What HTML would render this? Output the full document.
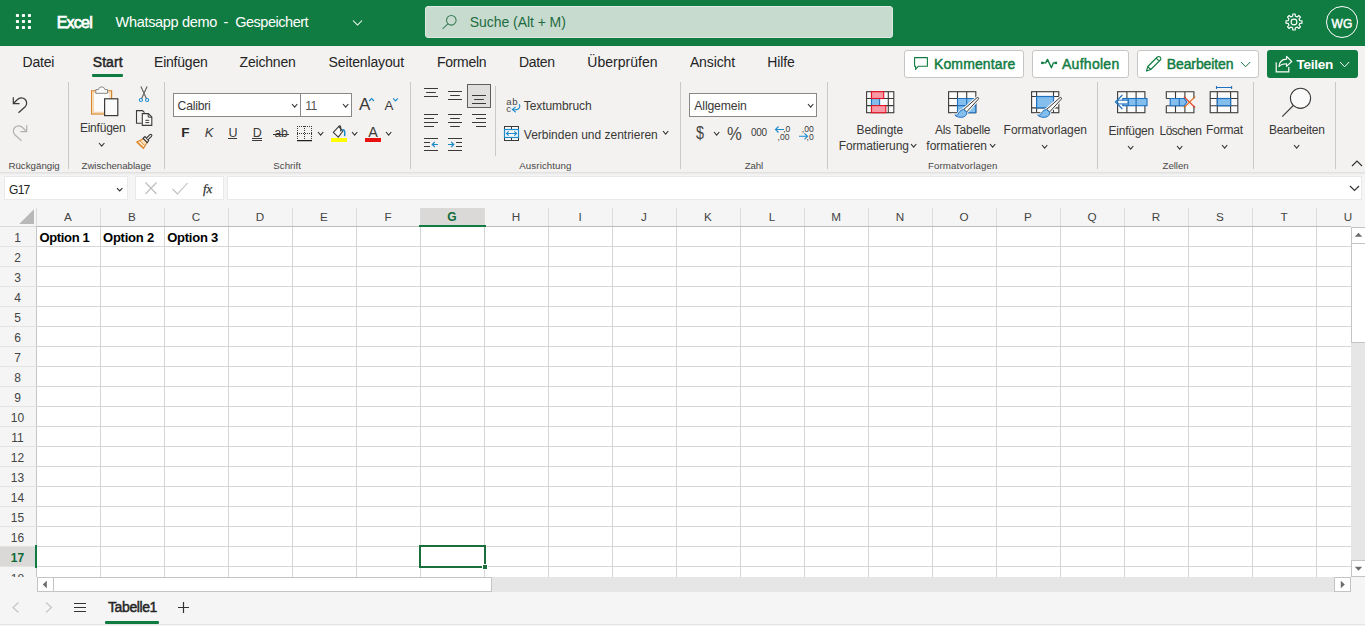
<!DOCTYPE html>
<html lang="de"><head><meta charset="utf-8"><title>Whatsapp demo.xlsx</title>
<style>
html,body{margin:0;padding:0;}
body{width:1365px;height:626px;overflow:hidden;background:#f5f5f5;font-family:"Liberation Sans",sans-serif;}
#app{position:relative;width:1365px;height:626px;overflow:hidden;}
.a{position:absolute;}
.t{position:absolute;white-space:nowrap;line-height:0;height:0;}
.t::before{content:"";display:inline-block;height:0;}
svg{position:absolute;overflow:visible;}
.sep{position:absolute;width:1px;background:#cbc9c7;}
.btn{position:absolute;box-sizing:border-box;border:1px solid #c8c6c4;border-radius:3px;background:#fff;}
.vl{position:absolute;width:1px;background:#d6d6d6;top:227px;height:350px;}
.hl{position:absolute;height:1px;background:#d6d6d6;left:36px;width:1315px;}
.chl{position:absolute;width:1px;background:#dcdcdc;top:208px;height:18px;}
</style></head><body><div id="app">

<div class="a" style="left:0;top:0;width:1365px;height:46px;background:#107c41"></div>
<svg width="1365" height="46" style="left:0;top:0"><rect x="15.9" y="14.1" width="3.1" height="2.9" rx="0.7" fill="#fff"/><rect x="15.9" y="20.1" width="3.1" height="2.9" rx="0.7" fill="#fff"/><rect x="15.9" y="26.1" width="3.1" height="2.9" rx="0.7" fill="#fff"/><rect x="21.9" y="14.1" width="3.1" height="2.9" rx="0.7" fill="#fff"/><rect x="21.9" y="20.1" width="3.1" height="2.9" rx="0.7" fill="#fff"/><rect x="21.9" y="26.1" width="3.1" height="2.9" rx="0.7" fill="#fff"/><rect x="27.9" y="14.1" width="3.1" height="2.9" rx="0.7" fill="#fff"/><rect x="27.9" y="20.1" width="3.1" height="2.9" rx="0.7" fill="#fff"/><rect x="27.9" y="26.1" width="3.1" height="2.9" rx="0.7" fill="#fff"/></svg>
<span class="t" style="left:56.7px;top:22.5px;font-size:16px;font-weight:400;color:#fff;letter-spacing:-0.765px;-webkit-text-stroke:0.75px #fff;">Excel</span>
<span class="t" style="left:115.6px;top:22.0px;font-size:14.5px;font-weight:400;color:#fff;letter-spacing:-0.315px;">Whatsapp demo</span>
<span class="t" style="left:223.5px;top:22.0px;font-size:14.5px;font-weight:400;color:#fff;letter-spacing:0px;">-</span>
<span class="t" style="left:235.2px;top:22.0px;font-size:14.5px;font-weight:400;color:#fff;letter-spacing:-0.472px;">Gespeichert</span>
<svg width="12" height="8" style="left:352px;top:19px"><path d="M1 1.5 L5.5 6 L10 1.5" fill="none" stroke="#fff" stroke-width="1.05"/></svg>
<div class="a" style="left:425px;top:6px;width:468px;height:32px;border-radius:3px;background:#c7dbcf;box-sizing:border-box;border:1px solid #dde9e1"></div>
<svg width="18" height="18" style="left:441px;top:13px"><circle cx="10.3" cy="7.3" r="4.8" fill="none" stroke="#3a7a55" stroke-width="1.05"/><path d="M6.8 10.8 L1.5 16" stroke="#3a7a55" stroke-width="1.05" fill="none"/></svg>
<span class="t" style="left:469.8px;top:22.0px;font-size:14px;font-weight:400;color:#1e6b41;letter-spacing:-0.058px;">Suche (Alt + M)</span>
<svg width="18" height="18" style="left:1285.2px;top:13px" viewBox="0 0 18 18"><path d="M7.62 3.26 L7.80 0.99 L10.20 0.99 L10.38 3.26 A5.9 5.9 0 0 1 12.08 3.97 L13.82 2.49 L15.51 4.18 L14.03 5.92 A5.9 5.9 0 0 1 14.74 7.62 L17.01 7.80 L17.01 10.20 L14.74 10.38 A5.9 5.9 0 0 1 14.03 12.08 L15.51 13.82 L13.82 15.51 L12.08 14.03 A5.9 5.9 0 0 1 10.38 14.74 L10.20 17.01 L7.80 17.01 L7.62 14.74 A5.9 5.9 0 0 1 5.92 14.03 L4.18 15.51 L2.49 13.82 L3.97 12.08 A5.9 5.9 0 0 1 3.26 10.38 L0.99 10.20 L0.99 7.80 L3.26 7.62 A5.9 5.9 0 0 1 3.97 5.92 L2.49 4.18 L4.18 2.49 L5.92 3.97 A5.9 5.9 0 0 1 7.62 3.26 Z" fill="none" stroke="#fff" stroke-width="1.15" stroke-linejoin="round"/><circle cx="9" cy="9" r="2.9" fill="none" stroke="#fff" stroke-width="1.15"/></svg>
<div class="a" style="left:1326px;top:6px;width:32px;height:32px;box-sizing:border-box;border:1px solid #fff;border-radius:50%"></div>
<span class="t" style="left:1331.6px;top:24.0px;font-size:12px;font-weight:400;color:#fff;letter-spacing:0px;-webkit-text-stroke:0.45px #fff;">WG</span>
<div class="a" style="left:0;top:46px;width:1365px;height:126px;background:#f3f2f1"></div>
<div class="a" style="left:0;top:172px;width:1365px;height:4px;background:linear-gradient(#dcdcdc,#e8e8e8 30%,#f0f0f0 60%,#f5f5f5)"></div>
<span class="t" style="left:22.5px;top:62.0px;font-size:14px;font-weight:400;color:#242424;letter-spacing:-0.177px;">Datei</span>
<span class="t" style="left:92.7px;top:62.0px;font-size:14px;font-weight:400;color:#242424;letter-spacing:0.104px;-webkit-text-stroke:0.45px #242424;">Start</span>
<span class="t" style="left:154px;top:62.0px;font-size:14px;font-weight:400;color:#242424;letter-spacing:-0.21px;">Einfügen</span>
<span class="t" style="left:239.6px;top:62.0px;font-size:14px;font-weight:400;color:#242424;letter-spacing:-0.199px;">Zeichnen</span>
<span class="t" style="left:328.6px;top:62.0px;font-size:14px;font-weight:400;color:#242424;letter-spacing:-0.139px;">Seitenlayout</span>
<span class="t" style="left:436.9px;top:62.0px;font-size:14px;font-weight:400;color:#242424;letter-spacing:-0.266px;">Formeln</span>
<span class="t" style="left:519px;top:62.0px;font-size:14px;font-weight:400;color:#242424;letter-spacing:-0.312px;">Daten</span>
<span class="t" style="left:587.3px;top:62.0px;font-size:14px;font-weight:400;color:#242424;letter-spacing:0.035px;">Überprüfen</span>
<span class="t" style="left:689.9px;top:62.0px;font-size:14px;font-weight:400;color:#242424;letter-spacing:-0.117px;">Ansicht</span>
<span class="t" style="left:767.3px;top:62.0px;font-size:14px;font-weight:400;color:#242424;letter-spacing:-0.103px;">Hilfe</span>
<div class="a" style="left:92px;top:74px;width:31px;height:3px;background:#107c41;border-radius:1px"></div>
<div class="btn" style="left:904px;top:50px;width:120px;height:28px"></div>
<div class="btn" style="left:1032px;top:50px;width:97px;height:28px"></div>
<div class="btn" style="left:1137px;top:50px;width:122px;height:28px"></div>
<div class="a" style="left:1267px;top:50px;width:91px;height:28px;border-radius:3px;background:#107c41"></div>
<span class="t" style="left:934px;top:64.0px;font-size:14px;font-weight:400;color:#107c41;letter-spacing:0.124px;-webkit-text-stroke:0.45px #107c41;">Kommentare</span>
<span class="t" style="left:1062px;top:64.0px;font-size:14px;font-weight:400;color:#107c41;letter-spacing:0.277px;-webkit-text-stroke:0.45px #107c41;">Aufholen</span>
<span class="t" style="left:1166.7px;top:64.0px;font-size:14px;font-weight:400;color:#107c41;letter-spacing:-0.092px;-webkit-text-stroke:0.45px #107c41;">Bearbeiten</span>
<span class="t" style="left:1296.4px;top:64.5px;font-size:13.6px;font-weight:700;color:#fff;letter-spacing:-0.28px;">Teilen</span>
<svg width="16" height="16" style="left:913px;top:56px"><path d="M1.600 1.600 H14.400 V10.300 H5.200 L2.600 13.300 V10.300 H1.600 Z" fill="none" stroke="#107c41" stroke-width="1.1" stroke-linejoin="round"/></svg>
<svg width="18" height="14" style="left:1040px;top:57px"><path d="M2.300 5.900 H5.700 L7.500 2.400 L11.400 10.800 L13.300 5.900 H15.900" fill="none" stroke="#107c41" stroke-width="1.400" stroke-linejoin="round"/><rect x="1.100" y="4.700" width="2.400" height="2.400" fill="#107c41"/><rect x="14.700" y="4.700" width="2.400" height="2.400" fill="#107c41"/></svg>
<svg width="18" height="18" style="left:1145px;top:55px"><path d="M1.500 16 L2.800 11.500 L12.300 2 A1.900 1.900 0 0 1 15 2 L15.300 2.300 A1.900 1.900 0 0 1 15.300 5 L5.800 14.500 Z M11.200 3.200 L14.100 6.100 M2.800 11.600 L5.700 14.500" fill="none" stroke="#107c41" stroke-width="1.1" stroke-linejoin="round"/></svg>
<svg width="12" height="8" style="left:1240px;top:61px"><path d="M1 1 L5.600 5.800 L10.200 1" fill="none" stroke="#107c41" stroke-width="1"/></svg>
<svg width="20" height="20" style="left:1275px;top:55px"><path d="M1.200 7.300 V16.800 H13.800 V11.900" fill="none" stroke="#fff" stroke-width="1.200"/><path d="M11.600 1.300 L16.700 6.500 L11.600 11.300 V8.800 C8 8.800 5.600 9.600 3.900 11.600 C4.300 7 7 4.300 11.600 4.100 Z" fill="none" stroke="#fff" stroke-width="1.100" stroke-linejoin="round"/></svg>
<svg width="12" height="8" style="left:1338.600px;top:61px"><path d="M1 1 L5.600 5.800 L10.200 1" fill="none" stroke="#fff" stroke-width="1"/></svg>
<div class="sep" style="left:68px;top:82px;height:87px"></div>
<div class="sep" style="left:164px;top:82px;height:87px"></div>
<div class="sep" style="left:410px;top:82px;height:87px"></div>
<div class="sep" style="left:680px;top:82px;height:87px"></div>
<div class="sep" style="left:827px;top:82px;height:87px"></div>
<div class="sep" style="left:1097px;top:82px;height:87px"></div>
<div class="sep" style="left:1253px;top:82px;height:87px"></div>
<div class="sep" style="left:1335px;top:82px;height:87px"></div>
<div class="sep" style="left:495px;top:86px;height:70px"></div>
<svg width="40" height="60" style="left:0;top:90px"><g fill="none" stroke-width="1.2"><path d="M13.300 7.300 V13.600 H19.500 M13.600 13.300 L17.500 9.500 A5.300 5.300 0 0 1 25.200 16.800 L18.500 22.800" stroke="#3b3a39"/><path d="M26.700 35 V41.600 H20.400 M26.400 41.300 L22.500 37.500 A5.300 5.300 0 0 0 14.800 44.800 L21.500 50.800" stroke="#b3b1af"/></g></svg>
<span class="t" style="left:8.4px;top:165.5px;font-size:9.7px;font-weight:400;color:#4a4846;letter-spacing:0.023px;">Rückgängig</span>
<svg width="32" height="34" style="left:88px;top:84px"><rect x="3.600" y="6.800" width="20" height="23.200" fill="#fdf6ee" stroke="#d9852a" stroke-width="1.2"/><rect x="5.300" y="8.500" width="16.600" height="19.800" fill="#fbfbfb" stroke="#f5cf9f" stroke-width="1"/>
<path d="M7.800 9.300 V5.600 H10.400 A3.300 3.300 0 0 1 16.900 5.600 H19.500 V9.300 Z" fill="#fafafa" stroke="#8a8886" stroke-width="1"/>
<rect x="16.600" y="14.800" width="13.200" height="16.800" fill="#fbfbfb" stroke="#3b3a39" stroke-width="1.2"/></svg>
<span class="t" style="left:79.9px;top:128.0px;font-size:12px;font-weight:400;color:#3a3836;letter-spacing:-0.222px;">Einfügen</span>
<svg width="7.4" height="5.2" style="left:98px;top:141.8px"><path d="M1 1 L3.70 4.20 L6.40 1" fill="none" stroke="#333" stroke-width="1.1"/></svg>
<svg width="14" height="18" style="left:137px;top:85px"><path d="M3.900 1.500 L9.600 14 M10.100 1.500 L4.400 14" stroke="#605e5c" stroke-width="1.1" fill="none"/><circle cx="3.900" cy="15" r="1.500" fill="#fff" stroke="#1e8bcd" stroke-width="1.1"/><circle cx="10.100" cy="15" r="1.500" fill="#fff" stroke="#1e8bcd" stroke-width="1.1"/></svg>
<svg width="18" height="18" style="left:135px;top:109px"><path d="M6.800 14.300 H1.500 V1.600 H7.500 L9.500 3.600" fill="none" stroke="#3b3a39" stroke-width="1.100"/><path d="M7.300 4.600 H13.300 L16.800 8.100 V16.400 H7.300 Z" fill="#fbfbfb" stroke="#3b3a39" stroke-width="1.100"/><path d="M13.200 4.800 V8.200 H16.600" fill="none" stroke="#3b3a39" stroke-width="1"/><path d="M10.300 11.300 H14.200 M10.300 13.600 H14.200" stroke="#3b3a39" stroke-width="1"/></svg>
<svg width="18" height="18" style="left:135px;top:133px"><path d="M1.700 9 L8.400 5.700 L12 9.500 L8.500 15.500 Z" fill="#fbe3c4" stroke="#d9852a" stroke-width="1.100" stroke-linejoin="round"/><path d="M3 9.300 L8.500 15 M5.300 8 L9.700 12.600" stroke="#d9852a" stroke-width="0.900" fill="none"/><path d="M8 5.200 L10 3.600 L13.700 7.500 L12.300 9.600 Z" fill="#f3f2f1" stroke="#3b3a39" stroke-width="1.100"/><path d="M11.600 5 L14.900 1.700 A1.100 1.100 0 0 1 16.500 3.300 L13.200 6.600" fill="#f3f2f1" stroke="#3b3a39" stroke-width="1.100"/></svg>
<span class="t" style="left:81.5px;top:165.5px;font-size:9.7px;font-weight:400;color:#4a4846;letter-spacing:-0.023px;">Zwischenablage</span>
<div class="a" style="left:173px;top:93px;width:179px;height:24px;box-sizing:border-box;border:1px solid #8a8886;background:#fff"></div>
<div class="a" style="left:300px;top:94px;width:1px;height:22px;background:#8a8886"></div>
<span class="t" style="left:177.6px;top:106.0px;font-size:12.2px;font-weight:400;color:#3a3836;letter-spacing:-0.221px;">Calibri</span>
<span class="t" style="left:305.2px;top:106.0px;font-size:12.2px;font-weight:400;color:#55534f;letter-spacing:0px;letter-spacing:-0.5px;">11</span>
<svg width="7.3" height="5.2" style="left:290.9px;top:103px"><path d="M1 1 L3.65 4.20 L6.30 1" fill="none" stroke="#333" stroke-width="1.1"/></svg>
<svg width="7.3" height="5.2" style="left:341.7px;top:103px"><path d="M1 1 L3.65 4.20 L6.30 1" fill="none" stroke="#333" stroke-width="1.1"/></svg>
<span class="t" style="left:359.1px;top:104.5px;font-size:17px;font-weight:400;color:#3b3a39;letter-spacing:0px;">A</span>
<svg width="8" height="6" style="left:368px;top:97px"><path d="M1.200 4 L3.600 1.500 L6 4" fill="none" stroke="#1e8bcd" stroke-width="1.2"/></svg>
<span class="t" style="left:384.6px;top:105.5px;font-size:13.3px;font-weight:400;color:#3b3a39;letter-spacing:0px;">A</span>
<svg width="8" height="6" style="left:392px;top:97px"><path d="M1.200 1.400 L3.500 3.900 L5.800 1.400" fill="none" stroke="#1e8bcd" stroke-width="1.2"/></svg>
<span class="t" style="left:181.3px;top:132.5px;font-size:13.6px;font-weight:700;color:#2b2a29;letter-spacing:0px;">F</span>
<span class="t" style="left:204.8px;top:132.5px;font-size:13px;font-weight:400;color:#3b3a39;letter-spacing:0px;font-style:italic;">K</span>
<span class="t" style="left:228.5px;top:133.0px;font-size:12.5px;font-weight:400;color:#3b3a39;letter-spacing:0px;">U</span>
<div class="a" style="left:228px;top:138px;width:9px;height:1px;background:#3b3a39"></div>
<span class="t" style="left:252.8px;top:133.0px;font-size:12.5px;font-weight:400;color:#3b3a39;letter-spacing:0px;">D</span>
<div class="a" style="left:252px;top:138px;width:10px;height:1px;background:#3b3a39"></div><div class="a" style="left:252px;top:140px;width:10px;height:1px;background:#3b3a39"></div>
<span class="t" style="left:274.4px;top:133.0px;font-size:12px;font-weight:400;color:#3b3a39;letter-spacing:0px;">ab</span>
<div class="a" style="left:273px;top:134px;width:16px;height:1px;background:#3b3a39"></div>
<svg width="17" height="17" style="left:296px;top:125px" shape-rendering="crispEdges"><g stroke="#3b3a39" stroke-width="1" stroke-dasharray="1 1" fill="none"><path d="M1 1.500 H16 M1.500 1 V15 M15.500 1 V15 M8.500 1 V15 M1 8.500 H16"/></g><path d="M1 15.500 H16" stroke="#201f1e" stroke-width="1"/><path d="M1 16 H16" stroke="#201f1e" stroke-width="0.500" opacity="0.5"/></svg>
<svg width="7.3" height="5.2" style="left:317px;top:131.2px"><path d="M1 1 L3.65 4.20 L6.30 1" fill="none" stroke="#333" stroke-width="1.1"/></svg>
<svg width="18" height="14" style="left:331px;top:125px"><path d="M2.300 7.400 L7.700 1.700 L11.900 6 L7.300 12.200 Z" fill="#fafafa" stroke="#3b3a39" stroke-width="1.100" stroke-linejoin="round"/><path d="M7.700 1.700 C8.200 0.500 9.700 0.600 9.700 1.900 V6.600" fill="none" stroke="#3b3a39" stroke-width="1.100"/><path d="M11.900 4.900 C13.200 4.100 14 6 13.700 10.600" fill="none" stroke="#1e8bcd" stroke-width="1.500" stroke-linecap="round"/></svg>
<div class="a" style="left:331px;top:138px;width:16px;height:4px;background:#ffff00"></div>
<svg width="7.3" height="5.2" style="left:350.8px;top:131.2px"><path d="M1 1 L3.65 4.20 L6.30 1" fill="none" stroke="#333" stroke-width="1.1"/></svg>
<span class="t" style="left:368.2px;top:132.0px;font-size:14.4px;font-weight:400;color:#3b3a39;letter-spacing:0px;">A</span>
<div class="a" style="left:365px;top:138px;width:16px;height:4px;background:#e8110f"></div>
<svg width="7.3" height="5.2" style="left:384.8px;top:131.2px"><path d="M1 1 L3.65 4.20 L6.30 1" fill="none" stroke="#333" stroke-width="1.1"/></svg>
<span class="t" style="left:273.3px;top:165.5px;font-size:9.7px;font-weight:400;color:#4a4846;letter-spacing:0.033px;">Schrift</span>
<div class="a" style="left:467px;top:84px;width:24px;height:24px;box-sizing:border-box;border:1px solid #605e5c;background:#e1dfdd"></div>
<svg width="20" height="20" style="left:424px;top:0"><path d="M0 88.5 H14 M2.2 92.5 H11.8 M0 96.5 H14" stroke="#3b3a39" stroke-width="1.2" fill="none"/></svg>
<svg width="20" height="20" style="left:448px;top:0"><path d="M0 91.5 H14 M2.2 95.5 H11.8 M0 99.5 H14" stroke="#3b3a39" stroke-width="1.2" fill="none"/></svg>
<svg width="20" height="20" style="left:472px;top:0"><path d="M0 95.5 H14 M2.2 99.5 H11.8 M0 103.5 H14" stroke="#3b3a39" stroke-width="1.2" fill="none"/></svg>
<svg width="20" height="20" style="left:424px;top:0"><path d="M0 114.5 H14 M0 118.5 H10 M0 122.5 H14 M0 126.5 H10" stroke="#3b3a39" stroke-width="1.2" fill="none"/></svg>
<svg width="20" height="20" style="left:448px;top:0"><path d="M0 114.5 H14 M2.2 118.5 H11.8 M0 122.5 H14 M2.2 126.5 H11.8" stroke="#3b3a39" stroke-width="1.2" fill="none"/></svg>
<svg width="20" height="20" style="left:472px;top:0"><path d="M0 114.5 H14 M4 118.5 H14 M0 122.5 H14 M4 126.5 H14" stroke="#3b3a39" stroke-width="1.2" fill="none"/></svg>
<svg width="20" height="20" style="left:424px;top:0"><path d="M0 138.5 H14 M0 142.5 H6 M0 146.5 H6 M0 150.5 H14" stroke="#3b3a39" stroke-width="1.2" fill="none"/></svg>
<svg width="20" height="20" style="left:448px;top:0"><path d="M0 138.5 H14 M8 142.5 H14 M8 146.5 H14 M0 150.5 H14" stroke="#3b3a39" stroke-width="1.2" fill="none"/></svg>
<svg width="8" height="8" style="left:431px;top:140px"><path d="M7 4.500 H1.500 M3.800 2 L1.300 4.500 L3.800 7" fill="none" stroke="#1e8bcd" stroke-width="1.2"/></svg>
<svg width="8" height="8" style="left:447px;top:140px"><path d="M1 4.500 H6.500 M4.200 2 L6.700 4.500 L4.200 7" fill="none" stroke="#1e8bcd" stroke-width="1.2"/></svg>
<span class="t" style="left:506.2px;top:101.5px;font-size:9.6px;font-weight:400;color:#484644;letter-spacing:0px;letter-spacing:0.7px;">ab</span>
<span class="t" style="left:506.3px;top:108.5px;font-size:9.6px;font-weight:400;color:#484644;letter-spacing:0px;">c</span>
<svg width="12" height="12" style="left:510px;top:102px"><path d="M9.300 2.300 C11 6.300 8 8.300 2.600 7.700 M5.600 4.900 L2.400 7.600 L5.800 10.200" fill="none" stroke="#1e8bcd" stroke-width="1.100"/></svg>
<span class="t" style="left:523.8px;top:106.0px;font-size:12px;font-weight:400;color:#3a3836;letter-spacing:-0.091px;">Textumbruch</span>
<svg width="18" height="18" style="left:503px;top:125px"><rect x="1.500" y="1.500" width="14" height="14" fill="#fbfbfb" stroke="#3b3a39" stroke-width="1"/><path d="M8.500 1.500 V4.500 M8.500 12.500 V15.500" stroke="#3b3a39" stroke-width="1"/><rect x="1.500" y="4.500" width="14" height="8" fill="#f6f6f6" stroke="#1e8bcd" stroke-width="1.200"/><path d="M3.600 8.500 H13.400 M5.700 6.300 L3.400 8.500 L5.700 10.700 M11.300 6.300 L13.600 8.500 L11.300 10.700" fill="none" stroke="#1e8bcd" stroke-width="1.100"/></svg>
<span class="t" style="left:523.8px;top:135.0px;font-size:12px;font-weight:400;color:#3a3836;letter-spacing:-0.005px;">Verbinden und zentrieren</span>
<svg width="7.3" height="5.2" style="left:661.8px;top:130.2px"><path d="M1 1 L3.65 4.20 L6.30 1" fill="none" stroke="#333" stroke-width="1.1"/></svg>
<span class="t" style="left:519.3px;top:165.5px;font-size:9.7px;font-weight:400;color:#4a4846;letter-spacing:0.103px;">Ausrichtung</span>
<div class="a" style="left:689px;top:93px;width:128px;height:24px;box-sizing:border-box;border:1px solid #8a8886;background:#fff"></div>
<span class="t" style="left:694.3px;top:106.0px;font-size:12.2px;font-weight:400;color:#3a3836;letter-spacing:-0.126px;">Allgemein</span>
<svg width="7.3" height="5.2" style="left:806.7px;top:103px"><path d="M1 1 L3.65 4.20 L6.30 1" fill="none" stroke="#333" stroke-width="1.1"/></svg>
<span class="t" style="left:696.2px;top:133.0px;font-size:18px;font-weight:400;color:#484644;letter-spacing:0px;transform:scaleX(0.8);transform-origin:0 0;">$</span>
<svg width="7.3" height="5.2" style="left:712.8px;top:131.2px"><path d="M1 1 L3.65 4.20 L6.30 1" fill="none" stroke="#333" stroke-width="1.1"/></svg>
<span class="t" style="left:727.2px;top:133.5px;font-size:18.5px;font-weight:400;color:#484644;letter-spacing:0px;transform:scaleX(0.9);transform-origin:0 0;">%</span>
<span class="t" style="left:750.9px;top:132.5px;font-size:10px;font-weight:400;color:#3b3a39;letter-spacing:-0.296px;">000</span>
<span class="t" style="left:783.2px;top:129.0px;font-size:8.6px;font-weight:400;color:#3b3a39;letter-spacing:0px;">,0</span>
<span class="t" style="left:777.5px;top:137.0px;font-size:8.6px;font-weight:400;color:#3b3a39;letter-spacing:0.016px;">,00</span>
<svg width="12" height="8" style="left:774px;top:125px"><path d="M10 4.500 H1.800 M4.500 1.500 L1.500 4.500 L4.500 7.500" fill="none" stroke="#1e8bcd" stroke-width="1.1"/></svg>
<span class="t" style="left:801.8px;top:129.0px;font-size:8.6px;font-weight:400;color:#3b3a39;letter-spacing:0.016px;">,00</span>
<span class="t" style="left:806.6px;top:137.0px;font-size:8.6px;font-weight:400;color:#3b3a39;letter-spacing:0px;">,0</span>
<svg width="12" height="8" style="left:798px;top:132px"><path d="M1 4.300 H9.200 M6.500 1.300 L9.500 4.300 L6.500 7.300" fill="none" stroke="#1e8bcd" stroke-width="1.1"/></svg>
<span class="t" style="left:744.7px;top:165.5px;font-size:9.7px;font-weight:400;color:#4a4846;letter-spacing:-0.14px;">Zahl</span>
<svg width="34" height="30" style="left:864px;top:88px"><rect x="2.600" y="3.700" width="27.200" height="21" fill="#fbfbfb" stroke="#3b3a39" stroke-width="1.100"/><path d="M7.500 3.700 V24.700 M24.300 3.700 V24.700 M2.600 10.500 H29.800 M2.600 17.600 H29.800" stroke="#3b3a39" stroke-width="1.100"/><rect x="7.500" y="10.500" width="8.100" height="7.100" fill="#83beec" stroke="#1e70c0" stroke-width="1.100"/><rect x="7.500" y="3.700" width="12.200" height="6.800" fill="#f79aa5" stroke="#e81123" stroke-width="1.100"/><rect x="7.500" y="17.600" width="14.300" height="7.100" fill="#f79aa5" stroke="#e81123" stroke-width="1.100"/></svg>
<span class="t" style="left:856.5px;top:130.0px;font-size:12px;font-weight:400;color:#3a3836;letter-spacing:-0.109px;">Bedingte</span>
<span class="t" style="left:838.7px;top:146.0px;font-size:12px;font-weight:400;color:#3a3836;letter-spacing:-0.106px;">Formatierung</span>
<svg width="7.3" height="5.2" style="left:910.3px;top:142.5px"><path d="M1 1 L3.65 4.20 L6.30 1" fill="none" stroke="#333" stroke-width="1.1"/></svg>
<svg width="40" height="34" style="left:946px;top:88px"><rect x="2.600" y="3.700" width="27.200" height="21" fill="#fbfbfb" stroke="#3b3a39" stroke-width="1.100"/><rect x="11.500" y="10.500" width="18.300" height="14.200" fill="#83beec"/><path d="M11.500 3.700 V10.500 M20.700 3.700 V10.500 M2.600 10.500 H11.500 M2.600 17.600 H11.500" stroke="#3b3a39" stroke-width="1.100"/><path d="M11.500 10.500 H29.800 M11.500 17.600 H29.800 M11.500 10.500 V24.700 M20.700 10.500 V24.700 M29.800 10.500 V24.700 M11.500 24.700 H29.800" stroke="#1e70c0" stroke-width="1.100"/><path d="M31.1 9.6 C32.1 9.0 33.1 10.1 32.4 11.1 L20.6 24.0 L17.8 21.4 Z" fill="none" stroke="#f3f2f1" stroke-width="3"/><path d="M17.5 21.5 C13.9 22.2 12.8 24.6 12.0 26.2 C11.2 27.2 10.2 27.3 8.8 27.1 C11.2 29.6 17.2 30.2 19.5 27.8 C20.6 26.6 20.9 25.4 20.8 24.1 Z" fill="none" stroke="#f3f2f1" stroke-width="2.6"/><path d="M31.1 9.6 C32.1 9.0 33.1 10.1 32.4 11.1 L20.6 24.0 L17.8 21.4 Z" fill="#fafafa" stroke="#3b3a39" stroke-width="1"/><path d="M17.5 21.5 C13.9 22.2 12.8 24.6 12.0 26.2 C11.2 27.2 10.2 27.3 8.8 27.1 C11.2 29.6 17.2 30.2 19.5 27.8 C20.6 26.6 20.9 25.4 20.8 24.1 Z" fill="#83beec" stroke="#1e70c0" stroke-width="1"/></svg>
<span class="t" style="left:934.9px;top:130.0px;font-size:12px;font-weight:400;color:#3a3836;letter-spacing:-0.221px;">Als Tabelle</span>
<span class="t" style="left:926.3px;top:146.0px;font-size:12px;font-weight:400;color:#3a3836;letter-spacing:-0.0px;">formatieren</span>
<svg width="7.3" height="5.2" style="left:989.3px;top:142.5px"><path d="M1 1 L3.65 4.20 L6.30 1" fill="none" stroke="#333" stroke-width="1.1"/></svg>
<svg width="40" height="34" style="left:1029px;top:88px"><rect x="2.600" y="3.700" width="27.200" height="21" fill="#fbfbfb" stroke="#3b3a39" stroke-width="1.100"/><path d="M7.600 3.700 V24.700 M24.500 3.700 V24.700 M2.600 8.500 H29.800 M2.600 19.900 H29.800" stroke="#3b3a39" stroke-width="1.100"/><rect x="7.600" y="8.500" width="16.900" height="11.400" fill="#83beec" stroke="#1e70c0" stroke-width="1.200"/><path d="M31.0 9.6 C32.0 9.0 33.0 10.1 32.3 11.1 L20.5 24.0 L17.7 21.4 Z" fill="none" stroke="#f3f2f1" stroke-width="3"/><path d="M17.4 21.5 C13.8 22.2 12.7 24.6 11.9 26.2 C11.1 27.2 10.1 27.3 8.7 27.1 C11.1 29.6 17.1 30.2 19.4 27.8 C20.5 26.6 20.8 25.4 20.7 24.1 Z" fill="none" stroke="#f3f2f1" stroke-width="2.6"/><path d="M31.0 9.6 C32.0 9.0 33.0 10.1 32.3 11.1 L20.5 24.0 L17.7 21.4 Z" fill="#fafafa" stroke="#3b3a39" stroke-width="1"/><path d="M17.4 21.5 C13.8 22.2 12.7 24.6 11.9 26.2 C11.1 27.2 10.1 27.3 8.7 27.1 C11.1 29.6 17.1 30.2 19.4 27.8 C20.5 26.6 20.8 25.4 20.7 24.1 Z" fill="#83beec" stroke="#1e70c0" stroke-width="1"/></svg>
<span class="t" style="left:1003.6px;top:130.0px;font-size:12px;font-weight:400;color:#3a3836;letter-spacing:-0.046px;">Formatvorlagen</span>
<svg width="7.3" height="5.2" style="left:1040.7px;top:143.6px"><path d="M1 1 L3.65 4.20 L6.30 1" fill="none" stroke="#333" stroke-width="1.1"/></svg>
<span class="t" style="left:928px;top:165.5px;font-size:9.7px;font-weight:400;color:#4a4846;letter-spacing:0.111px;">Formatvorlagen</span>
<svg width="40" height="30" style="left:1112px;top:88px"><rect x="5.600" y="3.700" width="27.300" height="21" fill="#fbfbfb" stroke="#3b3a39" stroke-width="1.100"/><path d="M14.900 3.700 V24.700 M24.100 3.700 V24.700" stroke="#3b3a39" stroke-width="1.100"/><rect x="10.800" y="10.500" width="24.200" height="7.200" fill="#83beec" stroke="#1e70c0" stroke-width="1.100"/><path d="M16.300 10.500 V17.700 M24.100 10.500 V17.700" stroke="#1e70c0" stroke-width="1.100"/><path d="M10.400 7 L3.400 14 L10.400 21" fill="none" stroke="#1e70c0" stroke-width="1.100"/><path d="M4.800 14 L7.200 12.200 H16 V15.900 H7.200 Z" fill="#fafafa" stroke="#1e70c0" stroke-width="1"/></svg>
<span class="t" style="left:1108.5px;top:131.0px;font-size:12px;font-weight:400;color:#3a3836;letter-spacing:-0.234px;">Einfügen</span>
<svg width="7.3" height="5.2" style="left:1126.9px;top:144.6px"><path d="M1 1 L3.65 4.20 L6.30 1" fill="none" stroke="#333" stroke-width="1.1"/></svg>
<svg width="40" height="30" style="left:1163px;top:88px"><path d="M3.300 10.500 V3.700 H30.900 V10.500 M3.300 17.700 V24.700 H30.900 V17.700" fill="#fbfbfb" stroke="#3b3a39" stroke-width="1.100"/><path d="M12.500 3.700 V10.500 M21.900 3.700 V10.500 M12.500 17.700 V24.700 M21.900 17.700 V24.700 M3.300 10.500 H21 M3.300 17.700 H21" stroke="#3b3a39" stroke-width="1.100"/><path d="M7.200 10.500 H21.300 L23.900 14.100 L21.300 17.700 H7.200 Z" fill="#83beec" stroke="#1e70c0" stroke-width="1.100"/><path d="M16.300 10.500 V17.700" stroke="#1e70c0" stroke-width="1.100"/><path d="M21 8.600 L32.100 19.600" stroke="#e8381a" stroke-width="1.200"/><path d="M32.100 8.600 L21 19.600" stroke="#e06a1b" stroke-width="1.200"/></svg>
<span class="t" style="left:1159.5px;top:131.0px;font-size:12px;font-weight:400;color:#3a3836;letter-spacing:-0.496px;">Löschen</span>
<svg width="7.3" height="5.2" style="left:1175.7px;top:144.6px"><path d="M1 1 L3.65 4.20 L6.30 1" fill="none" stroke="#333" stroke-width="1.1"/></svg>
<svg width="34" height="34" style="left:1207px;top:84px"><rect x="3.200" y="7.700" width="27.600" height="21" fill="#fbfbfb" stroke="#3b3a39" stroke-width="1.100"/><path d="M10.300 7.700 V28.700 M23.600 7.700 V28.700 M3.200 14.500 H30.800 M3.200 21.700 H30.800" stroke="#3b3a39" stroke-width="1.100"/><rect x="10.300" y="14.500" width="13.300" height="7.200" fill="#83beec" stroke="#1e70c0" stroke-width="1.200"/><path d="M9.500 3.500 H24.600 M9.500 1.900 V5.100 M24.600 1.900 V5.100" stroke="#1e70c0" stroke-width="1.100" fill="none"/></svg>
<span class="t" style="left:1206px;top:130.0px;font-size:12px;font-weight:400;color:#3a3836;letter-spacing:-0.169px;">Format</span>
<svg width="7.3" height="5.2" style="left:1220.7px;top:143.6px"><path d="M1 1 L3.65 4.20 L6.30 1" fill="none" stroke="#333" stroke-width="1.1"/></svg>
<span class="t" style="left:1162.5px;top:165.5px;font-size:9.7px;font-weight:400;color:#4a4846;letter-spacing:-0.032px;">Zellen</span>
<svg width="36" height="36" style="left:1279px;top:85px"><circle cx="21.500" cy="13.300" r="10.100" fill="#fafafa" stroke="#3b3a39" stroke-width="1.100"/><path d="M14.300 20.500 L3.200 31.700" stroke="#3b3a39" stroke-width="1.100"/></svg>
<span class="t" style="left:1268.9px;top:130.0px;font-size:12px;font-weight:400;color:#3a3836;letter-spacing:-0.225px;">Bearbeiten</span>
<svg width="7.3" height="5.2" style="left:1293.1px;top:143.6px"><path d="M1 1 L3.65 4.20 L6.30 1" fill="none" stroke="#333" stroke-width="1.1"/></svg>
<svg width="14" height="10" style="left:1350px;top:158px"><path d="M2 8 L7 3 L12 8" fill="none" stroke="#333" stroke-width="1.2"/></svg>
<div class="a" style="left:4px;top:176px;width:124px;height:24px;background:#fff;box-sizing:border-box;border:1px solid #e9e9e9"></div>
<div class="a" style="left:135px;top:176px;width:89px;height:24px;background:#fff;box-sizing:border-box;border:1px solid #e9e9e9"></div>
<div class="a" style="left:227px;top:176px;width:1135px;height:24px;background:#fff;box-sizing:border-box;border:1px solid #e9e9e9"></div>
<span class="t" style="left:9.1px;top:190.0px;font-size:12px;font-weight:400;color:#242424;letter-spacing:-0.763px;">G17</span>
<svg width="8" height="6" style="left:116px;top:186.700px"><path d="M1 1.2 L3.7 4 L6.4 1.2" fill="none" stroke="#333" stroke-width="1.2"/></svg>
<svg width="80" height="20" style="left:140px;top:179px"><path d="M5.500 3.500 L16.500 15 M16.500 3.500 L5.500 15" stroke="#bdbdbd" stroke-width="1.1" fill="none"/><path d="M32.500 10 L37.500 15 L47.500 4" stroke="#bdbdbd" stroke-width="1.1" fill="none"/></svg>
<span class="t" style="left:203px;top:189.3px;font-family:'Liberation Serif',serif;font-style:italic;font-size:13px;color:#333;letter-spacing:0px;-webkit-text-stroke:0.25px #333">fx</span>
<svg width="12" height="8" style="left:1349px;top:185px"><path d="M1 1 L5.500 5.500 L10 1" fill="none" stroke="#333" stroke-width="1.2"/></svg>
<div class="a" style="left:36px;top:227px;width:1315px;height:350px;background:#fff"></div>
<div class="a" style="left:420px;top:208px;width:65px;height:18px;background:#dbd9d7"></div>
<div class="a" style="left:0;top:547px;width:36px;height:20px;background:#dbd9d7"></div>
<div class="vl" style="left:36px"></div>
<span class="t" style="left:56.0px;top:216.5px;font-size:11.7px;font-weight:400;color:#444;width:24px;text-align:center;">A</span>
<div class="chl" style="left:100px"></div>
<div class="vl" style="left:100px"></div>
<span class="t" style="left:120.0px;top:216.5px;font-size:11.7px;font-weight:400;color:#444;width:24px;text-align:center;">B</span>
<div class="chl" style="left:164px"></div>
<div class="vl" style="left:164px"></div>
<span class="t" style="left:184.0px;top:216.5px;font-size:11.7px;font-weight:400;color:#444;width:24px;text-align:center;">C</span>
<div class="chl" style="left:228px"></div>
<div class="vl" style="left:228px"></div>
<span class="t" style="left:248.0px;top:216.5px;font-size:11.7px;font-weight:400;color:#444;width:24px;text-align:center;">D</span>
<div class="chl" style="left:292px"></div>
<div class="vl" style="left:292px"></div>
<span class="t" style="left:312.0px;top:216.5px;font-size:11.7px;font-weight:400;color:#444;width:24px;text-align:center;">E</span>
<div class="chl" style="left:356px"></div>
<div class="vl" style="left:356px"></div>
<span class="t" style="left:376.0px;top:216.5px;font-size:11.7px;font-weight:400;color:#444;width:24px;text-align:center;">F</span>
<div class="chl" style="left:420px"></div>
<div class="vl" style="left:420px"></div>
<span class="t" style="left:440.0px;top:217.0px;font-size:12px;font-weight:700;color:#0e6b38;width:24px;text-align:center;">G</span>
<div class="chl" style="left:484px"></div>
<div class="vl" style="left:484px"></div>
<span class="t" style="left:504.0px;top:216.5px;font-size:11.7px;font-weight:400;color:#444;width:24px;text-align:center;">H</span>
<div class="chl" style="left:548px"></div>
<div class="vl" style="left:548px"></div>
<span class="t" style="left:568.0px;top:216.5px;font-size:11.7px;font-weight:400;color:#444;width:24px;text-align:center;">I</span>
<div class="chl" style="left:612px"></div>
<div class="vl" style="left:612px"></div>
<span class="t" style="left:632.0px;top:216.5px;font-size:11.7px;font-weight:400;color:#444;width:24px;text-align:center;">J</span>
<div class="chl" style="left:676px"></div>
<div class="vl" style="left:676px"></div>
<span class="t" style="left:696.0px;top:216.5px;font-size:11.7px;font-weight:400;color:#444;width:24px;text-align:center;">K</span>
<div class="chl" style="left:740px"></div>
<div class="vl" style="left:740px"></div>
<span class="t" style="left:760.0px;top:216.5px;font-size:11.7px;font-weight:400;color:#444;width:24px;text-align:center;">L</span>
<div class="chl" style="left:804px"></div>
<div class="vl" style="left:804px"></div>
<span class="t" style="left:824.0px;top:216.5px;font-size:11.7px;font-weight:400;color:#444;width:24px;text-align:center;">M</span>
<div class="chl" style="left:868px"></div>
<div class="vl" style="left:868px"></div>
<span class="t" style="left:888.0px;top:216.5px;font-size:11.7px;font-weight:400;color:#444;width:24px;text-align:center;">N</span>
<div class="chl" style="left:932px"></div>
<div class="vl" style="left:932px"></div>
<span class="t" style="left:952.0px;top:216.5px;font-size:11.7px;font-weight:400;color:#444;width:24px;text-align:center;">O</span>
<div class="chl" style="left:996px"></div>
<div class="vl" style="left:996px"></div>
<span class="t" style="left:1016.0px;top:216.5px;font-size:11.7px;font-weight:400;color:#444;width:24px;text-align:center;">P</span>
<div class="chl" style="left:1060px"></div>
<div class="vl" style="left:1060px"></div>
<span class="t" style="left:1080.0px;top:216.5px;font-size:11.7px;font-weight:400;color:#444;width:24px;text-align:center;">Q</span>
<div class="chl" style="left:1124px"></div>
<div class="vl" style="left:1124px"></div>
<span class="t" style="left:1144.0px;top:216.5px;font-size:11.7px;font-weight:400;color:#444;width:24px;text-align:center;">R</span>
<div class="chl" style="left:1188px"></div>
<div class="vl" style="left:1188px"></div>
<span class="t" style="left:1208.0px;top:216.5px;font-size:11.7px;font-weight:400;color:#444;width:24px;text-align:center;">S</span>
<div class="chl" style="left:1252px"></div>
<div class="vl" style="left:1252px"></div>
<span class="t" style="left:1272.0px;top:216.5px;font-size:11.7px;font-weight:400;color:#444;width:24px;text-align:center;">T</span>
<div class="chl" style="left:1316px"></div>
<div class="vl" style="left:1316px"></div>
<span class="t" style="left:1336.0px;top:216.5px;font-size:11.7px;font-weight:400;color:#444;width:24px;text-align:center;">U</span>
<div class="a" style="left:36px;top:226px;width:1315px;height:1px;background:#bdbdbd"></div>
<div class="a" style="left:36px;top:208px;width:1px;height:18px;background:#dcdcdc"></div>
<div class="a" style="left:36px;top:226px;width:1px;height:351px;background:#c6c6c6"></div>
<div class="a" style="left:0;top:226px;width:36px;height:1px;background:#d9d9d9"></div>
<div class="hl" style="top:246px"></div>
<div class="a" style="left:0;top:246px;width:36px;height:1px;background:#e3e3e3"></div>
<span class="t" style="left:5.5px;top:238.0px;font-size:12px;font-weight:400;color:#444;width:24px;text-align:center;">1</span>
<div class="hl" style="top:266px"></div>
<div class="a" style="left:0;top:266px;width:36px;height:1px;background:#e3e3e3"></div>
<span class="t" style="left:5.5px;top:258.0px;font-size:12px;font-weight:400;color:#444;width:24px;text-align:center;">2</span>
<div class="hl" style="top:286px"></div>
<div class="a" style="left:0;top:286px;width:36px;height:1px;background:#e3e3e3"></div>
<span class="t" style="left:5.5px;top:278.0px;font-size:12px;font-weight:400;color:#444;width:24px;text-align:center;">3</span>
<div class="hl" style="top:306px"></div>
<div class="a" style="left:0;top:306px;width:36px;height:1px;background:#e3e3e3"></div>
<span class="t" style="left:5.5px;top:298.0px;font-size:12px;font-weight:400;color:#444;width:24px;text-align:center;">4</span>
<div class="hl" style="top:326px"></div>
<div class="a" style="left:0;top:326px;width:36px;height:1px;background:#e3e3e3"></div>
<span class="t" style="left:5.5px;top:318.0px;font-size:12px;font-weight:400;color:#444;width:24px;text-align:center;">5</span>
<div class="hl" style="top:346px"></div>
<div class="a" style="left:0;top:346px;width:36px;height:1px;background:#e3e3e3"></div>
<span class="t" style="left:5.5px;top:338.0px;font-size:12px;font-weight:400;color:#444;width:24px;text-align:center;">6</span>
<div class="hl" style="top:366px"></div>
<div class="a" style="left:0;top:366px;width:36px;height:1px;background:#e3e3e3"></div>
<span class="t" style="left:5.5px;top:358.0px;font-size:12px;font-weight:400;color:#444;width:24px;text-align:center;">7</span>
<div class="hl" style="top:386px"></div>
<div class="a" style="left:0;top:386px;width:36px;height:1px;background:#e3e3e3"></div>
<span class="t" style="left:5.5px;top:378.0px;font-size:12px;font-weight:400;color:#444;width:24px;text-align:center;">8</span>
<div class="hl" style="top:406px"></div>
<div class="a" style="left:0;top:406px;width:36px;height:1px;background:#e3e3e3"></div>
<span class="t" style="left:5.5px;top:398.0px;font-size:12px;font-weight:400;color:#444;width:24px;text-align:center;">9</span>
<div class="hl" style="top:426px"></div>
<div class="a" style="left:0;top:426px;width:36px;height:1px;background:#e3e3e3"></div>
<span class="t" style="left:5.5px;top:418.0px;font-size:12px;font-weight:400;color:#444;width:24px;text-align:center;">10</span>
<div class="hl" style="top:446px"></div>
<div class="a" style="left:0;top:446px;width:36px;height:1px;background:#e3e3e3"></div>
<span class="t" style="left:5.5px;top:438.0px;font-size:12px;font-weight:400;color:#444;width:24px;text-align:center;">11</span>
<div class="hl" style="top:466px"></div>
<div class="a" style="left:0;top:466px;width:36px;height:1px;background:#e3e3e3"></div>
<span class="t" style="left:5.5px;top:458.0px;font-size:12px;font-weight:400;color:#444;width:24px;text-align:center;">12</span>
<div class="hl" style="top:486px"></div>
<div class="a" style="left:0;top:486px;width:36px;height:1px;background:#e3e3e3"></div>
<span class="t" style="left:5.5px;top:478.0px;font-size:12px;font-weight:400;color:#444;width:24px;text-align:center;">13</span>
<div class="hl" style="top:506px"></div>
<div class="a" style="left:0;top:506px;width:36px;height:1px;background:#e3e3e3"></div>
<span class="t" style="left:5.5px;top:498.0px;font-size:12px;font-weight:400;color:#444;width:24px;text-align:center;">14</span>
<div class="hl" style="top:526px"></div>
<div class="a" style="left:0;top:526px;width:36px;height:1px;background:#e3e3e3"></div>
<span class="t" style="left:5.5px;top:518.0px;font-size:12px;font-weight:400;color:#444;width:24px;text-align:center;">15</span>
<div class="hl" style="top:546px"></div>
<div class="a" style="left:0;top:546px;width:36px;height:1px;background:#e3e3e3"></div>
<span class="t" style="left:5.5px;top:538.0px;font-size:12px;font-weight:400;color:#444;width:24px;text-align:center;">16</span>
<div class="hl" style="top:566px"></div>
<div class="a" style="left:0;top:566px;width:36px;height:1px;background:#e3e3e3"></div>
<span class="t" style="left:5.5px;top:558.0px;font-size:12px;font-weight:700;color:#0e6b38;width:24px;text-align:center;">17</span>
<div class="a" style="left:0;top:567px;width:36px;height:10px;overflow:hidden"><span class="t" style="left:5.5px;top:12.0px;font-size:12px;font-weight:400;color:#444;width:24px;text-align:center;">18</span></div>
<svg width="16" height="16" style="left:19px;top:209px"><path d="M15 0.200 V15 H0.200 Z" fill="#b8b8b8"/></svg>
<span class="t" style="left:39.4px;top:237.5px;font-size:13px;font-weight:700;color:#000;letter-spacing:-0.327px;">Option 1</span>
<span class="t" style="left:103px;top:237.5px;font-size:13px;font-weight:700;color:#000;letter-spacing:-0.227px;">Option 2</span>
<span class="t" style="left:167.2px;top:237.5px;font-size:13px;font-weight:700;color:#000;letter-spacing:-0.24px;">Option 3</span>
<div class="a" style="left:419px;top:225px;width:67px;height:2px;background:#107c41"></div>
<div class="a" style="left:35px;top:545px;width:2px;height:23px;background:#107c41"></div>
<div class="a" style="left:419px;top:545px;width:67px;height:23px;box-sizing:border-box;border:2px solid #1a6e3c"></div>
<div class="a" style="left:482px;top:564px;width:6px;height:6px;background:#fff"></div>
<div class="a" style="left:483px;top:565px;width:4px;height:4px;background:#1a6e3c"></div>
<div class="a" style="left:1351px;top:227px;width:14px;height:350px;background:#e6e6e6"></div>
<div class="a" style="left:1351px;top:227px;width:14px;height:17px;background:#fff;box-sizing:border-box;border:1px solid #c4c4c4;border-right:0"></div>
<div class="a" style="left:1351px;top:243px;width:14px;height:100px;background:#fff;box-sizing:border-box;border:1px solid #c4c4c4;border-right:0"></div>
<div class="a" style="left:1351px;top:560px;width:14px;height:17px;background:#fff;box-sizing:border-box;border:1px solid #c4c4c4;border-right:0"></div>
<svg width="10" height="6" style="left:1354px;top:232px"><path d="M0.800 4.800 L4.500 0.800 L8.200 4.800 Z" fill="#6b6b6b"/></svg>
<svg width="10" height="6" style="left:1354px;top:566px"><path d="M0.800 0.800 L4.500 4.800 L8.200 0.800 Z" fill="#6b6b6b"/></svg>
<div class="a" style="left:37px;top:577px;width:1314px;height:15px;background:#e6e6e6"></div>
<div class="a" style="left:37px;top:577px;width:17px;height:15px;background:#fff;box-sizing:border-box;border:1px solid #c4c4c4"></div>
<div class="a" style="left:54px;top:577px;width:438px;height:15px;background:#fff;box-sizing:border-box;border:1px solid #c4c4c4;border-left:0"></div>
<div class="a" style="left:1334px;top:577px;width:17px;height:15px;background:#fff;box-sizing:border-box;border:1px solid #c4c4c4"></div>
<svg width="6" height="10" style="left:42px;top:580px"><path d="M4.800 0.800 L0.800 4.500 L4.800 8.200 Z" fill="#6b6b6b"/></svg>
<svg width="6" height="10" style="left:1340px;top:580px"><path d="M0.800 0.800 L4.800 4.500 L0.800 8.200 Z" fill="#6b6b6b"/></svg>
<div class="a" style="left:0;top:624px;width:1365px;height:1px;background:#e4e4e4"></div>
<svg width="200" height="34" style="left:0;top:592px"><path d="M18.500 10.500 L13 15.500 L18.500 20.500" fill="none" stroke="#c8c6c4" stroke-width="1.2"/><path d="M46 10.500 L51.500 15.500 L46 20.500" fill="none" stroke="#c8c6c4" stroke-width="1.2"/><path d="M74 11.500 H86 M74 15.500 H86 M74 19.500 H86" stroke="#333" stroke-width="1.2"/><path d="M178 15.500 H189 M183.500 10 V21" stroke="#333" stroke-width="1.2"/></svg>
<span class="t" style="left:108px;top:607.0px;font-size:14px;font-weight:400;color:#242424;letter-spacing:-0.395px;-webkit-text-stroke:0.45px #242424;">Tabelle1</span>
<div class="a" style="left:105px;top:621px;width:54px;height:3px;background:#107c41;border-radius:1px"></div>
</div></body></html>
